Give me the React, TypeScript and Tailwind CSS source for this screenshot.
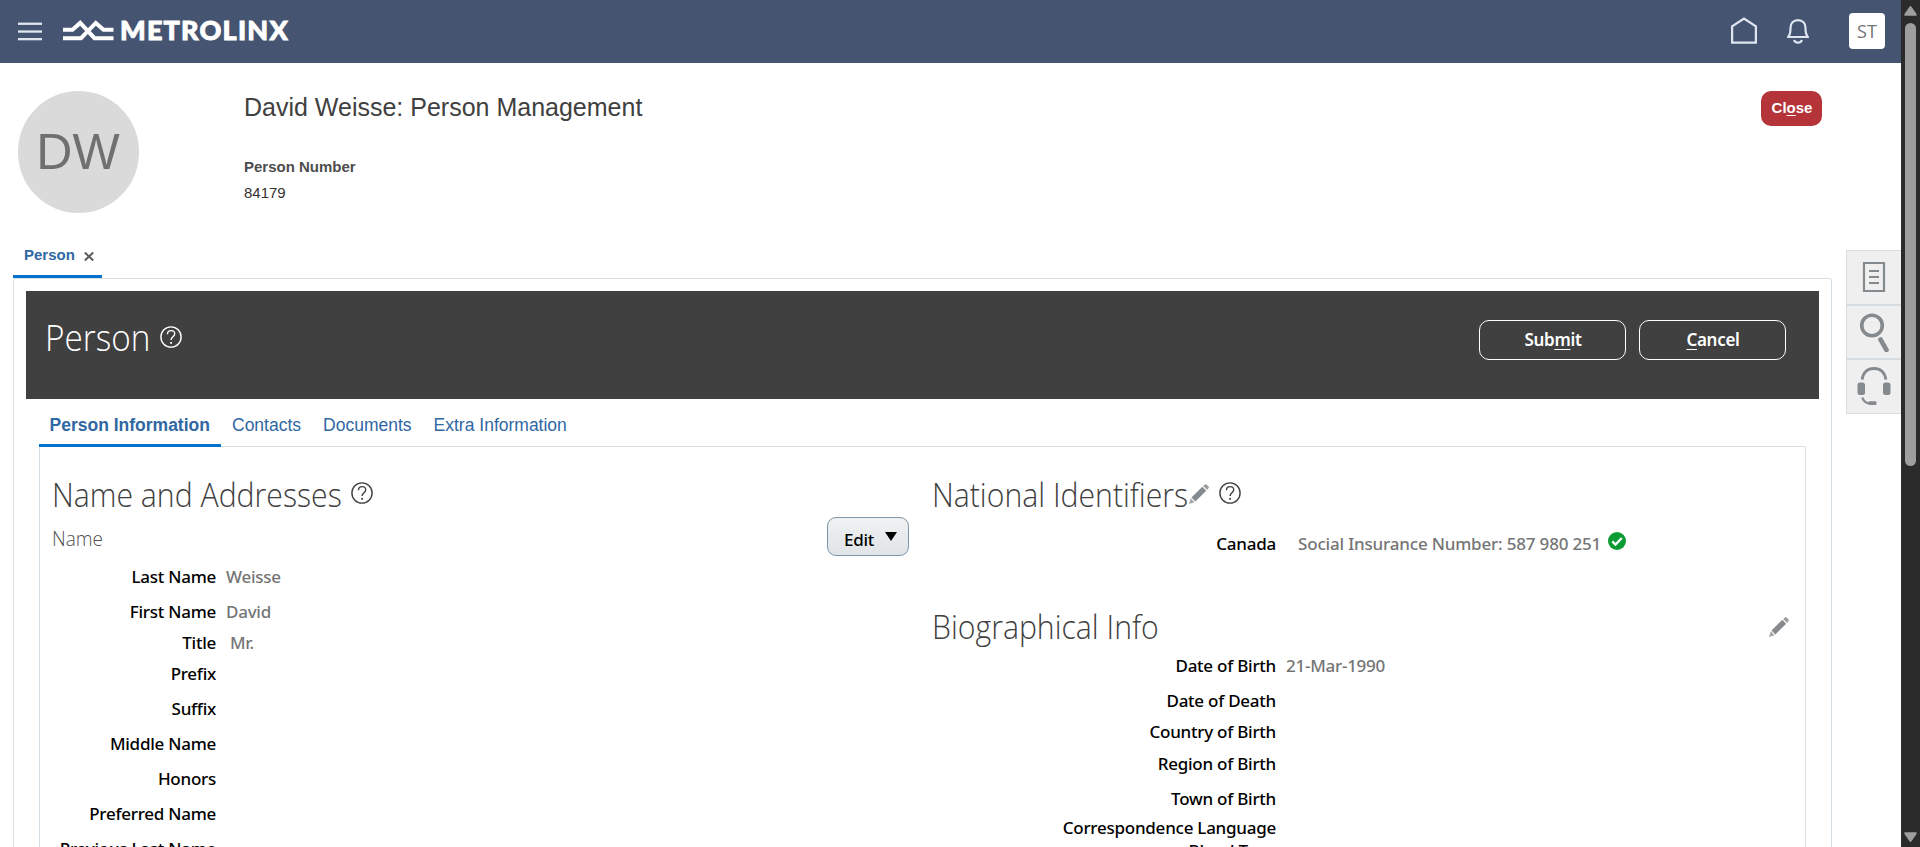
import React from "react";

const UI = "font-['Noto_Sans','Open_Sans',sans-serif]";
const ROW_LABEL = "font-['Noto_Sans','Open_Sans',sans-serif] text-[17px] leading-[24px] font-medium whitespace-nowrap";

function HelpIcon({ className }: { className: string }) {
  return (
    <svg className={className} width="22" height="22" viewBox="0 0 22 22" fill="none" stroke="currentColor">
      <circle cx="11" cy="11" r="10.1" strokeWidth="1.4" />
      <path d="M7.4 8.2C7.5 5.8 9 4.6 11.1 4.6c2.1 0 3.6 1.2 3.6 3.1 0 1.6-.9 2.4-2 3.3-1.1.9-1.6 1.4-1.6 2.9" strokeWidth="1.4" />
      <path d="M10.2 16.9h1.8" strokeWidth="1.8" />
    </svg>
  );
}

function Pencil({ className = "" }: { className?: string }) {
  return (
    <svg className={className} width="20" height="20" viewBox="0 0 20 20">
      <path d="M15.2 1 L17 0 L20 3 L19 4.9 L18 5.8 L14.2 2z" fill="#9a9ea1" />
      <path d="M13.3 2.8 L17.2 6.7 L6.4 17.4 L2.5 13.5z" fill="#858a8e" />
      <path d="M1.7 14.3 L5.6 18.2 L0 20z" fill="#a4a8ab" />
    </svg>
  );
}

function Field({ h, label, w, value, pad = "pl-[10px]" }: { h: string; label: string; w: string; value?: string; pad?: string }) {
  return (
    <div className={`flex items-end ${h}`}>
      <div className={`${ROW_LABEL} ${w} shrink-0 text-right tracking-[-0.25px] text-black`}>{label}</div>
      {value && <div className={`${ROW_LABEL} ${pad} tracking-[-0.25px] text-[#757575]`}>{value}</div>}
    </div>
  );
}

function Header() {
  return (
    <header className="flex h-[63px] shrink-0 items-center bg-[#455571] pl-[18px]">
      <svg className="mt-[-1px]" width="24" height="19" viewBox="0 0 24 19" fill="#dfe6ee">
        <rect y="0.6" width="24" height="2.3" />
        <rect y="8.4" width="24" height="2.3" />
        <rect y="16" width="24" height="2.3" />
      </svg>
      <svg className="mt-[-2px] ml-5" width="52" height="21" viewBox="0 0 52 21" fill="none" stroke="#fff" strokeWidth="4">
        <path d="M1 9.8H10.5L18.2 2.9L32.5 18.2H51.500" />
        <path d="M1 18.200H19L33.800 2.900L41.500 9.800H51.500" />
      </svg>
      <div className="mt-[-3px] ml-[6px] font-[Lato,sans-serif] text-[27px] leading-[40px] font-black tracking-[1.2px] text-white [-webkit-text-stroke:0.9px_#fff]">METROLINX</div>
      <svg className="mt-[-2px] ml-auto" width="26" height="27" viewBox="0 0 26 27" fill="none" stroke="#dfe6f1" strokeWidth="2.2">
        <path d="M1.1 25.6V9.3L13 1.6L24.9 9.3V25.6z" />
      </svg>
      <svg className="mt-[-1px] ml-[30px]" width="22" height="25" viewBox="0 0 22 25" fill="none" stroke="#dfe6f1" strokeWidth="2.2">
        <path d="M1.2 18C3.2 15.6 3.5 13.4 3.5 9C3.5 4.4 6.4 1.2 11 1.2S18.5 4.4 18.5 9C18.5 13.4 18.8 15.6 20.8 18z" />
        <path d="M7.2 20.8C7.8 24.6 14.2 24.6 14.8 20.8" />
      </svg>
      <div className="mt-[-1px] mr-4 ml-10 flex h-9 w-9 items-center justify-center rounded-[4px] bg-white font-['Open_Sans',sans-serif] text-[18px] text-[#757575]">
        ST
      </div>
    </header>
  );
}

function SideDock() {
  return (
    <div className="mt-[187px] ml-[14px] flex w-[55px] flex-col self-start text-[#858a8e]">
      <div className="flex h-[55px] items-center justify-center border border-r-0 border-[#d6dde3] bg-[#efefef]">
        <svg className="mt-[-1px]" width="24" height="30" viewBox="0 0 24 30" fill="none" stroke="currentColor" strokeWidth="2.2">
          <path d="M2 1h20v28h-20zM7 9h10M7 15h10M7 21h10" />
        </svg>
      </div>
      <div className="flex h-[54px] items-center justify-center border border-r-0 border-[#d6dde3] bg-[#efefef]">
        <svg width="30" height="40" viewBox="0 0 30 40" fill="none" stroke="currentColor">
          <circle cx="13" cy="13.500" r="10.300" strokeWidth="3.600" />
          <path d="M21.500 27.500l6 10.500" strokeWidth="4.600" strokeLinecap="round" />
        </svg>
      </div>
      <div className="flex h-[55px] items-center justify-center border border-r-0 border-[#d6dde3] bg-[#efefef]">
        <svg className="mt-[-2px]" width="34" height="38" viewBox="0 0 34 38" fill="none" stroke="currentColor">
          <path d="M5.200 12.600C6 5.500 10.500 1.500 17 1.500S28 5.500 28.800 12.600" strokeWidth="2.800" />
          <rect x="0.500" y="15.500" width="7.500" height="12.500" rx="2.500" fill="currentColor" stroke="none" />
          <rect x="26" y="15.500" width="7.500" height="12.500" rx="2.500" fill="currentColor" stroke="none" />
          <path d="M5.300 30.500C6.500 34.500 8.500 36 12 36.400" strokeWidth="2.400" />
          <rect x="11.500" y="34.200" width="8" height="3.800" rx="1.200" fill="currentColor" stroke="none" />
        </svg>
      </div>
    </div>
  );
}

function Scrollbar() {
  return (
    <div className="flex w-[19px] shrink-0 flex-col items-center bg-[#2b2b2b] pt-[6px] pb-[5px]">
      <svg width="13" height="10" viewBox="0 0 13 10" fill="#9e9e9e">
        <path d="M6.500 0Q7 0 7.500 .7L12.500 8Q13.200 9.800 11.800 9.800H1.200Q-.2 9.800 .5 8L5.500 .7Q6 0 6.500 0z" />
      </svg>
      <div className="mt-[7px] h-[443px] w-[11px] rounded-full bg-[#9e9e9e]" />
      <svg className="mt-auto" width="13" height="10" viewBox="0 0 13 10" fill="#9e9e9e">
        <path d="M6.500 9.900Q7 9.900 7.500 9.200L12.500 2Q13.200 .2 11.800 .2H1.200Q-.2 .2 .5 2L5.500 9.200Q6 9.900 6.500 9.900z" />
      </svg>
    </div>
  );
}

const H2 = "origin-left scale-x-[0.915] pt-[2px] font-['Open_Sans',sans-serif] text-[33px] leading-[44px] font-light whitespace-nowrap text-[#404040]";

function LeftColumn() {
  return (
    <div className="w-[880px] shrink-0 pt-[25px]">
      <div className="flex h-[44px] items-center pl-[12px]">
        <h2 className={`${H2} w-[299px]`}>Name and Addresses</h2>
        <HelpIcon className="mt-[-2px] text-[#404040]" />
      </div>
      <div className="flex h-[51px] justify-between pr-[11px] pl-[12px]">
        <h3 className="origin-left scale-x-[0.95] pt-[9px] font-['Open_Sans',sans-serif] text-[20px] leading-[28px] font-light text-[#505050]">Name</h3>
        <button className={`${UI} mt-px flex h-[39px] w-[82px] items-center rounded-[9px] border border-[#7d95a8] bg-linear-to-b from-[#f0f2f3] to-[#e0e4e7] pt-[6px] pl-[16px] text-[17px] leading-[24px] font-medium tracking-[-0.3px] text-black`}>
          Edit
          <svg className="mt-[-6px] ml-[11px]" width="12" height="9" viewBox="0 0 12 9">
            <path d="M0 0h12L6 9z" />
          </svg>
        </button>
      </div>
      <div className="-mt-[10px]">
        <Field h="h-[32px]" w="w-[176px]" label="Last Name" value="Weisse" />
        <Field h="h-[35px]" w="w-[176px]" label="First Name" value="David" />
        <Field h="h-[31px]" w="w-[176px]" label="Title" value="Mr." pad="pl-[14px]" />
        <Field h="h-[31px]" w="w-[176px]" label="Prefix" />
        <Field h="h-[35px]" w="w-[176px]" label="Suffix" />
        <Field h="h-[35px]" w="w-[176px]" label="Middle Name" />
        <Field h="h-[35px]" w="w-[176px]" label="Honors" />
        <Field h="h-[35px]" w="w-[176px]" label="Preferred Name" />
        <Field h="h-[35px]" w="w-[176px]" label="Previous Last Name" />
      </div>
    </div>
  );
}

function RightColumn() {
  return (
    <div className="flex-1 pt-[25px]">
      <div className="flex h-[44px] items-center pl-[12px]">
        <h2 className={`${H2} w-[257px]`}>National Identifiers</h2>
        <Pencil />
        <HelpIcon className="mt-[-2px] ml-[10px] text-[#404040]" />
      </div>
      <div className="flex h-[40px] items-end">
        <div className={`${ROW_LABEL} w-[356px] shrink-0 text-right tracking-[-0.25px] text-black`}>Canada</div>
        <div className={`${ROW_LABEL} pl-[22px] tracking-[-0.18px] text-[#757575]`}>Social Insurance Number: 587 980 251</div>
        <svg className="mb-[6px] ml-[7px]" width="18" height="18" viewBox="0 0 18 18">
          <circle cx="9" cy="9" r="9" fill="#0a9b33" />
          <path d="M4.300 9.400l3.200 3.200 6.300-6.600" fill="none" stroke="#fff" strokeWidth="2.400" />
        </svg>
      </div>
      <div className="mt-[48px] flex h-[44px] items-center justify-between pr-[16px] pl-[12px]">
        <h2 className={H2}>Biographical Info</h2>
        <Pencil className="mt-[2px]" />
      </div>
      <Field h="h-[30px]" w="w-[356px]" label="Date of Birth" value="21-Mar-1990" />
      <Field h="h-[35px]" w="w-[356px]" label="Date of Death" />
      <Field h="h-[31px]" w="w-[356px]" label="Country of Birth" />
      <Field h="h-[32px]" w="w-[356px]" label="Region of Birth" />
      <Field h="h-[35px]" w="w-[356px]" label="Town of Birth" />
      <Field h="h-[29px]" w="w-[356px]" label="Correspondence Language" />
      <Field h="h-[23px]" w="w-[356px]" label="Blood Type" />
    </div>
  );
}

function PersonPanel() {
  const btn = `${UI} flex h-10 w-[147px] items-center justify-center rounded-[10px] border border-white pl-px text-[17px] font-semibold tracking-[-0.3px] text-white`;
  return (
    <div className="h-[640px] rounded-t-[2px] border border-[#d6dfe6] px-3 pt-3">
      <div className="flex h-[108px] justify-between bg-[#404040] pr-[33px] pl-[19px]">
        <div className="flex h-[52px] items-center pt-[39px]">
          <h1 className="w-[115px] origin-left scale-x-[0.9] font-['Open_Sans',sans-serif] text-[37px] leading-[50px] font-light text-white">Person</h1>
          <HelpIcon className="text-white" />
        </div>
        <div className="flex gap-[13px] pt-[29px]">
          <button className={btn}>
            <span>Sub<span className="underline underline-offset-[3px]">m</span>it</span>
          </button>
          <button className={btn}>
            <span><span className="underline underline-offset-[3px]">C</span>ancel</span>
          </button>
        </div>
      </div>
      <div className="px-[13px]">
        <div className="flex h-[47px] text-[17.5px] leading-[20px] whitespace-nowrap text-[#2f67a3]">
          <div className="z-10 -mb-px w-[182px] border-b-[3px] border-[#0572ce] pt-[16px] pl-[10.5px] font-bold">Person Information</div>
          <div className="pt-[16px] pl-[11px]">Contacts</div>
          <div className="pt-[16px] pl-[22px]">Documents</div>
          <div className="pt-[16px] pl-[22px]">Extra Information</div>
        </div>
        <div className="flex h-[500px] rounded-t-[2px] border border-[#d6dfe6]">
          <LeftColumn />
          <RightColumn />
        </div>
      </div>
    </div>
  );
}

export default function App() {
  return (
    <div className="flex h-[847px] w-[1920px] overflow-hidden bg-white font-['Liberation_Sans',Arial,sans-serif]">
      <div className="flex w-[1901px] shrink-0 flex-col">
        <Header />
        <div className="flex">
          <div className="ml-[13px] w-[1819px] shrink-0">
            <div className="flex h-[166px] pt-[28px]">
              <div className="ml-[5px] flex h-[122px] w-[121px] items-center justify-center rounded-full bg-[#dadada] pr-px text-[50px] text-[#707070]">DW</div>
              <div className="ml-[105px]">
                <h1 className="text-[25px] leading-[32px] text-[#404040]">David Weisse: Person Management</h1>
                <div className="mt-[34px] text-[15px] leading-[20px] font-bold text-[#4d4d4d]">Person Number</div>
                <div className="mt-[6px] text-[15px] leading-[20px] text-[#333]">84179</div>
              </div>
              <button className="mr-[10px] ml-auto h-[35px] w-[61px] rounded-[10px] bg-[#b43439] pl-px text-[15px] font-bold text-white">
                Cl<span className="underline underline-offset-2">o</span>se
              </button>
            </div>
            <div className="-mb-px flex h-[50px] items-start">
              <div className="z-10 flex h-[49px] w-[89px] items-center border-b-[3px] border-[#0572ce] pt-[6px] pl-[11px] text-[15px] font-bold text-[#2f67a3]">
                Person
                <svg className="mt-[2px] ml-[9px]" width="10" height="9" viewBox="0 0 10 9" fill="none" stroke="#5c5c5c" strokeWidth="2">
                  <path d="M.8 .5L9.200 8.500M9.200 .5L.8 8.500" />
                </svg>
              </div>
            </div>
            <PersonPanel />
          </div>
          <SideDock />
        </div>
      </div>
      <Scrollbar />
    </div>
  );
}
